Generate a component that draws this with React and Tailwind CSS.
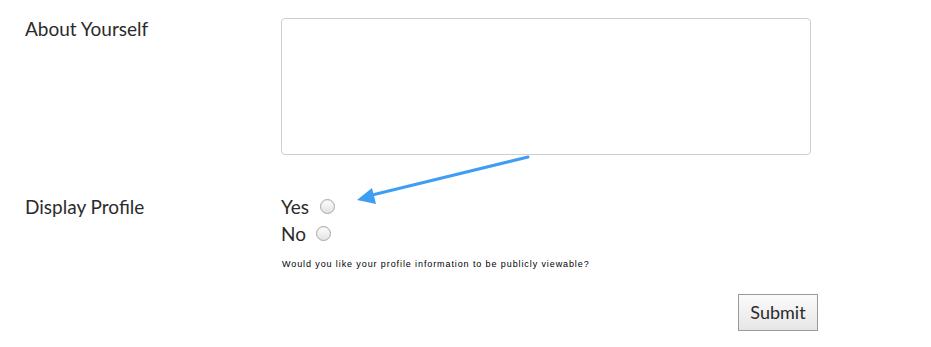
import React from 'react';

const Radio = () => (
  <span className="inline-block w-[15px] h-[15px] rounded-full border border-[#a8a8a8] bg-gradient-to-b from-white to-[#e2e2e2] shadow-[inset_0_1px_1px_rgba(0,0,0,0.08)]"></span>
);

const App = () => {
  return (
    <div className="relative w-[931px] h-[347px] bg-white font-['Lato',sans-serif] text-[#2b2b2b] overflow-hidden">
      <form className="w-[818px] pl-[25px] pt-[18px] flex flex-col">
        {/* About Yourself */}
        <div className="flex">
          <label className="w-[256px] text-[19px] leading-[22px]">About Yourself</label>
          <textarea className="w-[530px] h-[137px] border border-[#cfcfcf] rounded-[4px] resize-none outline-none"></textarea>
        </div>

        {/* Display Profile */}
        <div className="flex mt-[38px]">
          <label className="w-[256px] text-[19px] leading-[27px]">Display Profile</label>
          <div className="flex flex-col">
            <div className="flex items-center text-[19px] leading-[27px]">
              Yes <span className="ml-[11px] flex"><Radio /></span>
            </div>
            <div className="flex items-center text-[19px] leading-[27px]">
              No <span className="ml-[10px] flex"><Radio /></span>
            </div>
            <p className="mt-[11px] text-[9px] leading-[12px] tracking-[0.9px] font-['Liberation_Sans',Arial,sans-serif] text-black pl-[1px]">
              Would you like your profile information to be publicly viewable?
            </p>
          </div>
        </div>

        <div className="flex justify-end mt-[24px]">
          <button
            type="button"
            className="w-[80px] h-[37px] border border-[#9a9a9a] bg-gradient-to-b from-[#fbfbfb] to-[#e6e6e6] text-[18px] text-[#2b2b2b]"
          >
            Submit
          </button>
        </div>
      </form>

      {/* Annotation arrow */}
      <svg className="absolute left-0 top-0 pointer-events-none" width="931" height="347">
        <line x1="528" y1="157" x2="368" y2="196" stroke="#3f9ef1" strokeWidth="3" strokeLinecap="round" />
        <polygon points="357,200 372,188 376,204" fill="#3f9ef1" />
      </svg>
    </div>
  );
};

export default App;
